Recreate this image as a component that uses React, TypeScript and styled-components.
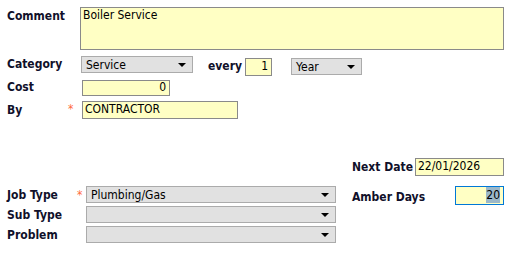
import React, { FC } from 'react';
import styled, { createGlobalStyle } from 'styled-components';

const GlobalStyle = createGlobalStyle`
	body {
		margin: 0;
		background: #ffffff;
		font-family: Tahoma, 'DejaVu Sans Condensed', 'DejaVu Sans', sans-serif;
		font-size: 12px;
		color: #10102a;
	}
`;

const Page = styled.div`
	width: 515px;
	height: 266px;
	box-sizing: border-box;
	padding: 7px 11px 0 7px;
`;

const Row = styled.div<{ top?: number }>`
	display: flex;
	align-items: flex-start;
	margin-top: ${(props) => props.top ?? 0}px;
`;

const Label = styled.div<{ width?: number; pad?: number; gapLeft?: number }>`
	width: ${(props) => (props.width ? `${props.width}px` : 'auto')};
	flex: none;
	font-weight: bold;
	line-height: 14px;
	padding-top: ${(props) => props.pad ?? 0}px;
	margin-left: ${(props) => props.gapLeft ?? 0}px;
	white-space: nowrap;
`;

const Required = styled.span<{ width: number; pad?: number }>`
	width: ${(props) => props.width}px;
	flex: none;
	color: #ff6a3d;
	font-size: 12px;
	line-height: 14px;
	padding-top: ${(props) => props.pad ?? 0}px;
`;

const Field = styled.div<{ width: number; height: number; align?: 'left' | 'right'; focused?: boolean; shift?: number }>`
	box-sizing: border-box;
	width: ${(props) => props.width}px;
	height: ${(props) => props.height}px;
	flex: none;
	margin-top: ${(props) => props.shift ?? 0}px;
	background: #ffffc4;
	border: 1px solid ${(props) => (props.focused ? '#0078d7' : '#8a8a8a')};
	padding: 0 3px 0 2px;
	line-height: ${(props) => props.height - 3}px;
	text-align: ${(props) => props.align ?? 'left'};
	color: #000;
	white-space: nowrap;
	overflow: hidden;
`;

const TextArea = styled(Field)`
	line-height: 15px;
	padding: 0 2px;
`;

const Selected = styled.span`
	background: #9cb8c9;
	padding: 1px 0;
`;

const Select = styled.div<{ width: number; shift?: number; gapLeft?: number }>`
	box-sizing: border-box;
	width: ${(props) => props.width}px;
	height: 17px;
	flex: none;
	margin-top: ${(props) => props.shift ?? 0}px;
	margin-left: ${(props) => props.gapLeft ?? 0}px;
	display: flex;
	align-items: center;
	justify-content: space-between;
	background: #e1e1e1;
	border: 1px solid #ababab;
	padding: 0 6px 0 4px;
	line-height: 14px;
	color: #000;
`;

const Arrow = styled.span`
	width: 0;
	height: 0;
	border-left: 4px solid transparent;
	border-right: 4px solid transparent;
	border-top: 4px solid #000;
`;

const Bottom = styled.div`
	display: flex;
	margin-top: 39px;
	gap: 16px;
`;

const Column = styled.div<{ top?: number; gap: number }>`
	display: flex;
	flex-direction: column;
	gap: ${(props) => props.gap}px;
	padding-top: ${(props) => props.top ?? 0}px;
`;

const CenterRow = styled.div`
	display: flex;
	align-items: center;
`;

type DropdownProps = { width: number; value?: string; shift?: number; gapLeft?: number };

const Dropdown: FC<DropdownProps> = ({ width, value, shift, gapLeft }) => (
	<Select width={width} shift={shift} gapLeft={gapLeft}>
		<span>{value ?? ''}</span>
		<Arrow />
	</Select>
);

const App: FC = () => (
	<>
		<GlobalStyle />
		<Page>
			<Row>
				<Label width={73} pad={2}>
					Comment
				</Label>
				<TextArea width={424} height={43}>
					Boiler Service
				</TextArea>
			</Row>
			<Row top={6}>
				<Label width={74} pad={1}>
					Category
				</Label>
				<Dropdown width={112} value="Service" />
				<Label width={37} pad={3} gapLeft={15}>
					every
				</Label>
				<Field width={27} height={18} align="right" shift={2}>
					1
				</Field>
				<Dropdown width={71} value="Year" shift={2} gapLeft={19} />
			</Row>
			<Row top={4}>
				<Label width={75} pad={0}>
					Cost
				</Label>
				<Field width={88} height={16} align="right">
					0
				</Field>
			</Row>
			<Row top={5}>
				<Label width={61} pad={2}>
					By
				</Label>
				<Required width={14} pad={1}>
					*
				</Required>
				<Field width={156} height={18}>
					CONTRACTOR
				</Field>
			</Row>
			<Bottom>
				<Column top={28} gap={3}>
					<CenterRow>
						<Label width={70}>Job Type</Label>
						<Required width={9}>*</Required>
						<Dropdown width={250} value="Plumbing/Gas" />
					</CenterRow>
					<CenterRow>
						<Label width={79}>Sub Type</Label>
						<Dropdown width={250} />
					</CenterRow>
					<CenterRow>
						<Label width={79}>Problem</Label>
						<Dropdown width={250} />
					</CenterRow>
				</Column>
				<Column gap={10}>
					<CenterRow>
						<Label width={63}>Next Date</Label>
						<Field width={89} height={18}>
							22/01/2026
						</Field>
					</CenterRow>
					<CenterRow>
						<Label width={103} pad={2}>
							Amber Days
						</Label>
						<Field width={49} height={19} align="right" focused>
							<Selected>20</Selected>
						</Field>
					</CenterRow>
				</Column>
			</Bottom>
		</Page>
	</>
);

export default App;
